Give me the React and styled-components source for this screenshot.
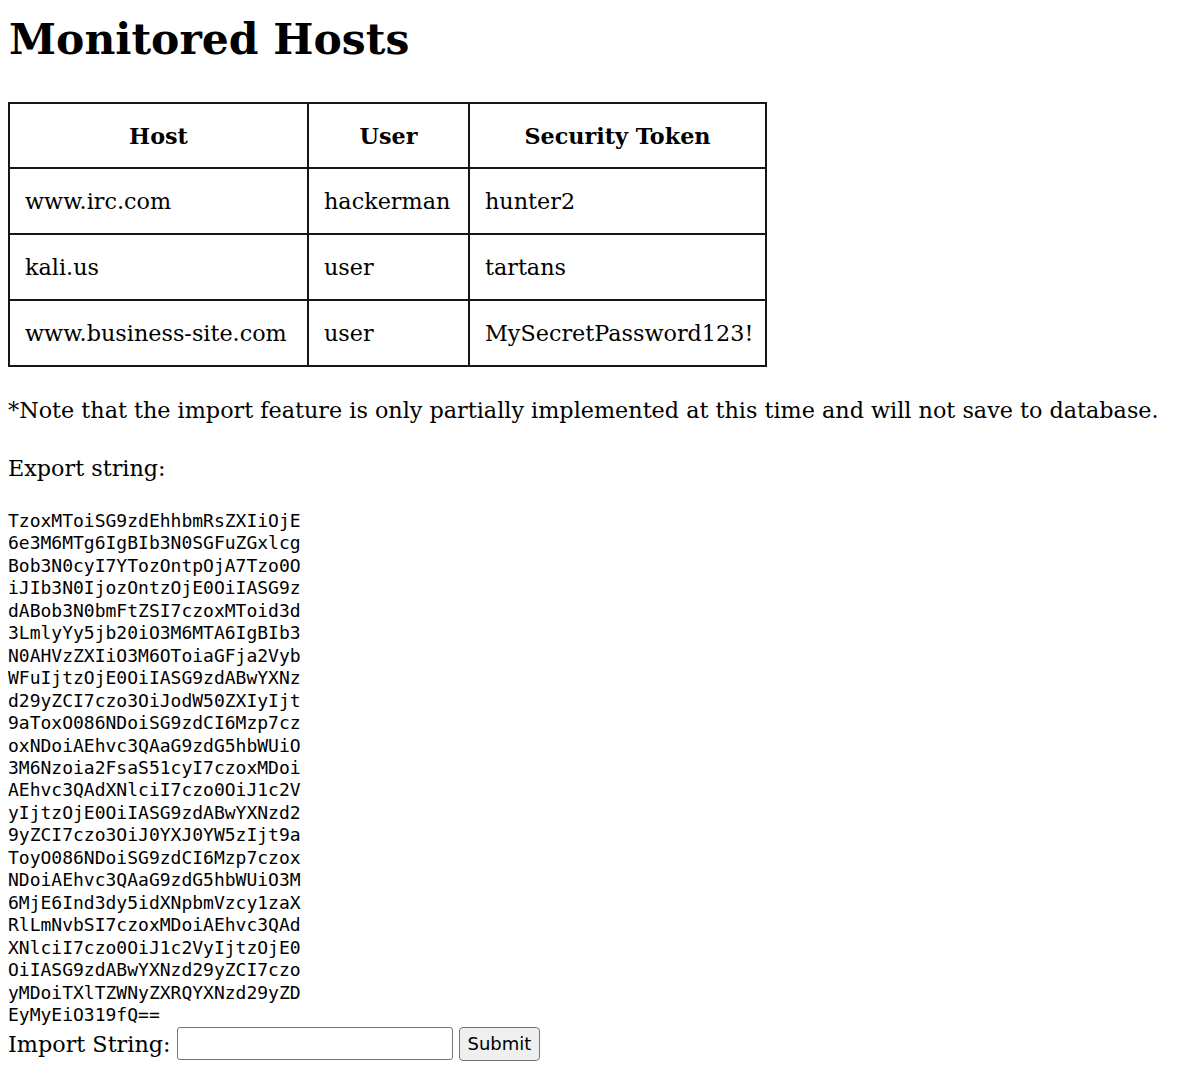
import React from 'react'
import styled, { createGlobalStyle } from 'styled-components'

const GlobalStyle = createGlobalStyle`
  body {
    margin: 8px;
    font-family: "DejaVu Serif", "Liberation Serif", serif;
    font-size: 22.3px;
    color: #000;
    background: #fff;
  }
`

const Page = styled.div`
  display: flex;
  flex-direction: column;
  align-items: flex-start;
`

const Title = styled.h1`
  font-size: 42.5px;
  font-weight: 700;
  line-height: 42px;
  margin: 10px 0 42px 1px;
`

const HostTable = styled.table`
  border-collapse: collapse;
  table-layout: fixed;
  width: 757px;
`

const HeadCell = styled.th`
  box-sizing: border-box;
  width: ${p => p.$w}px;
  height: 65px;
  padding: 0 16px;
  border: 2px solid #161616;
  font-weight: 700;
  text-align: center;
  vertical-align: middle;
`

const Cell = styled.td`
  height: 64px;
  padding: 0 15px;
  border: 2px solid #161616;
  vertical-align: middle;
  white-space: nowrap;
`

const Text = styled.p`
  margin: ${p => p.$top}px 0 0;
  line-height: 30px;
`

const ExportBlock = styled.div`
  margin-top: 27px;
  width: calc(27ch + 1px);
  font-family: "DejaVu Sans Mono", monospace;
  font-size: 18px;
  line-height: 22.45px;
  word-break: break-all;
`

const ImportForm = styled.form`
  display: flex;
  align-items: center;
  gap: 6px;
  height: 35px;
`

const Label = styled.label`
  line-height: 30px;
`

const Input = styled.input`
  box-sizing: border-box;
  width: 276px;
  height: 33px;
  margin: 0;
  padding: 1px 4px;
  border: 1px solid #767676;
  border-radius: 3px;
  background: #fff;
  font-size: 18px;
`

const Button = styled.button`
  box-sizing: border-box;
  height: 34px;
  margin: 0;
  padding: 5px 8px;
  border: 1px solid #767676;
  border-radius: 4px;
  background: #efefef;
  color: #000;
  font-family: "DejaVu Sans", sans-serif;
  font-size: 18px;
  line-height: 22px;
`

const hosts = [
  { host: 'www.irc.com', user: 'hackerman', token: 'hunter2' },
  { host: 'kali.us', user: 'user', token: 'tartans' },
  { host: 'www.business-site.com', user: 'user', token: 'MySecretPassword123!' },
]

const exportString =
  'TzoxMToiSG9zdEhhbmRsZXIiOjE6e3M6MTg6IgBIb3N0SGFuZGxlcgBob3N0cyI7YTozOntpOjA7Tzo0O' +
  'iJIb3N0IjozOntzOjE0OiIASG9zdABob3N0bmFtZSI7czoxMToid3d3LmlyYy5jb20iO3M6MTA6IgBIb3' +
  'N0AHVzZXIiO3M6OToiaGFja2VybWFuIjtzOjE0OiIASG9zdABwYXNzd29yZCI7czo3OiJodW50ZXIyIjt' +
  '9aToxO086NDoiSG9zdCI6Mzp7czoxNDoiAEhvc3QAaG9zdG5hbWUiO3M6Nzoia2FsaS51cyI7czoxMDoi' +
  'AEhvc3QAdXNlciI7czo0OiJ1c2VyIjtzOjE0OiIASG9zdABwYXNzd29yZCI7czo3OiJ0YXJ0YW5zIjt9a' +
  'ToyO086NDoiSG9zdCI6Mzp7czoxNDoiAEhvc3QAaG9zdG5hbWUiO3M6MjE6Ind3dy5idXNpbmVzcy1zaX' +
  'RlLmNvbSI7czoxMDoiAEhvc3QAdXNlciI7czo0OiJ1c2VyIjtzOjE0OiIASG9zdABwYXNzd29yZCI7czo' +
  'yMDoiTXlTZWNyZXRQYXNzd29yZDEyMyEiO319fQ=='

export default function App() {
  return (
    <Page>
      <GlobalStyle />
      <Title>Monitored Hosts</Title>
      <HostTable>
        <thead>
          <tr>
            <HeadCell $w={299}>Host</HeadCell>
            <HeadCell $w={161}>User</HeadCell>
            <HeadCell $w={297}>Security Token</HeadCell>
          </tr>
        </thead>
        <tbody>
          {hosts.map(h => (
            <tr key={h.host}>
              <Cell>{h.host}</Cell>
              <Cell>{h.user}</Cell>
              <Cell>{h.token}</Cell>
            </tr>
          ))}
        </tbody>
      </HostTable>
      <Text $top={28}>
        *Note that the import feature is only partially implemented at this time and will not save to database.
      </Text>
      <Text $top={28}>Export string:</Text>
      <ExportBlock>{exportString}</ExportBlock>
      <ImportForm onSubmit={e => e.preventDefault()}>
        <Label htmlFor="import">Import String:</Label>
        <Input id="import" type="text" />
        <Button type="submit">Submit</Button>
      </ImportForm>
    </Page>
  )
}
